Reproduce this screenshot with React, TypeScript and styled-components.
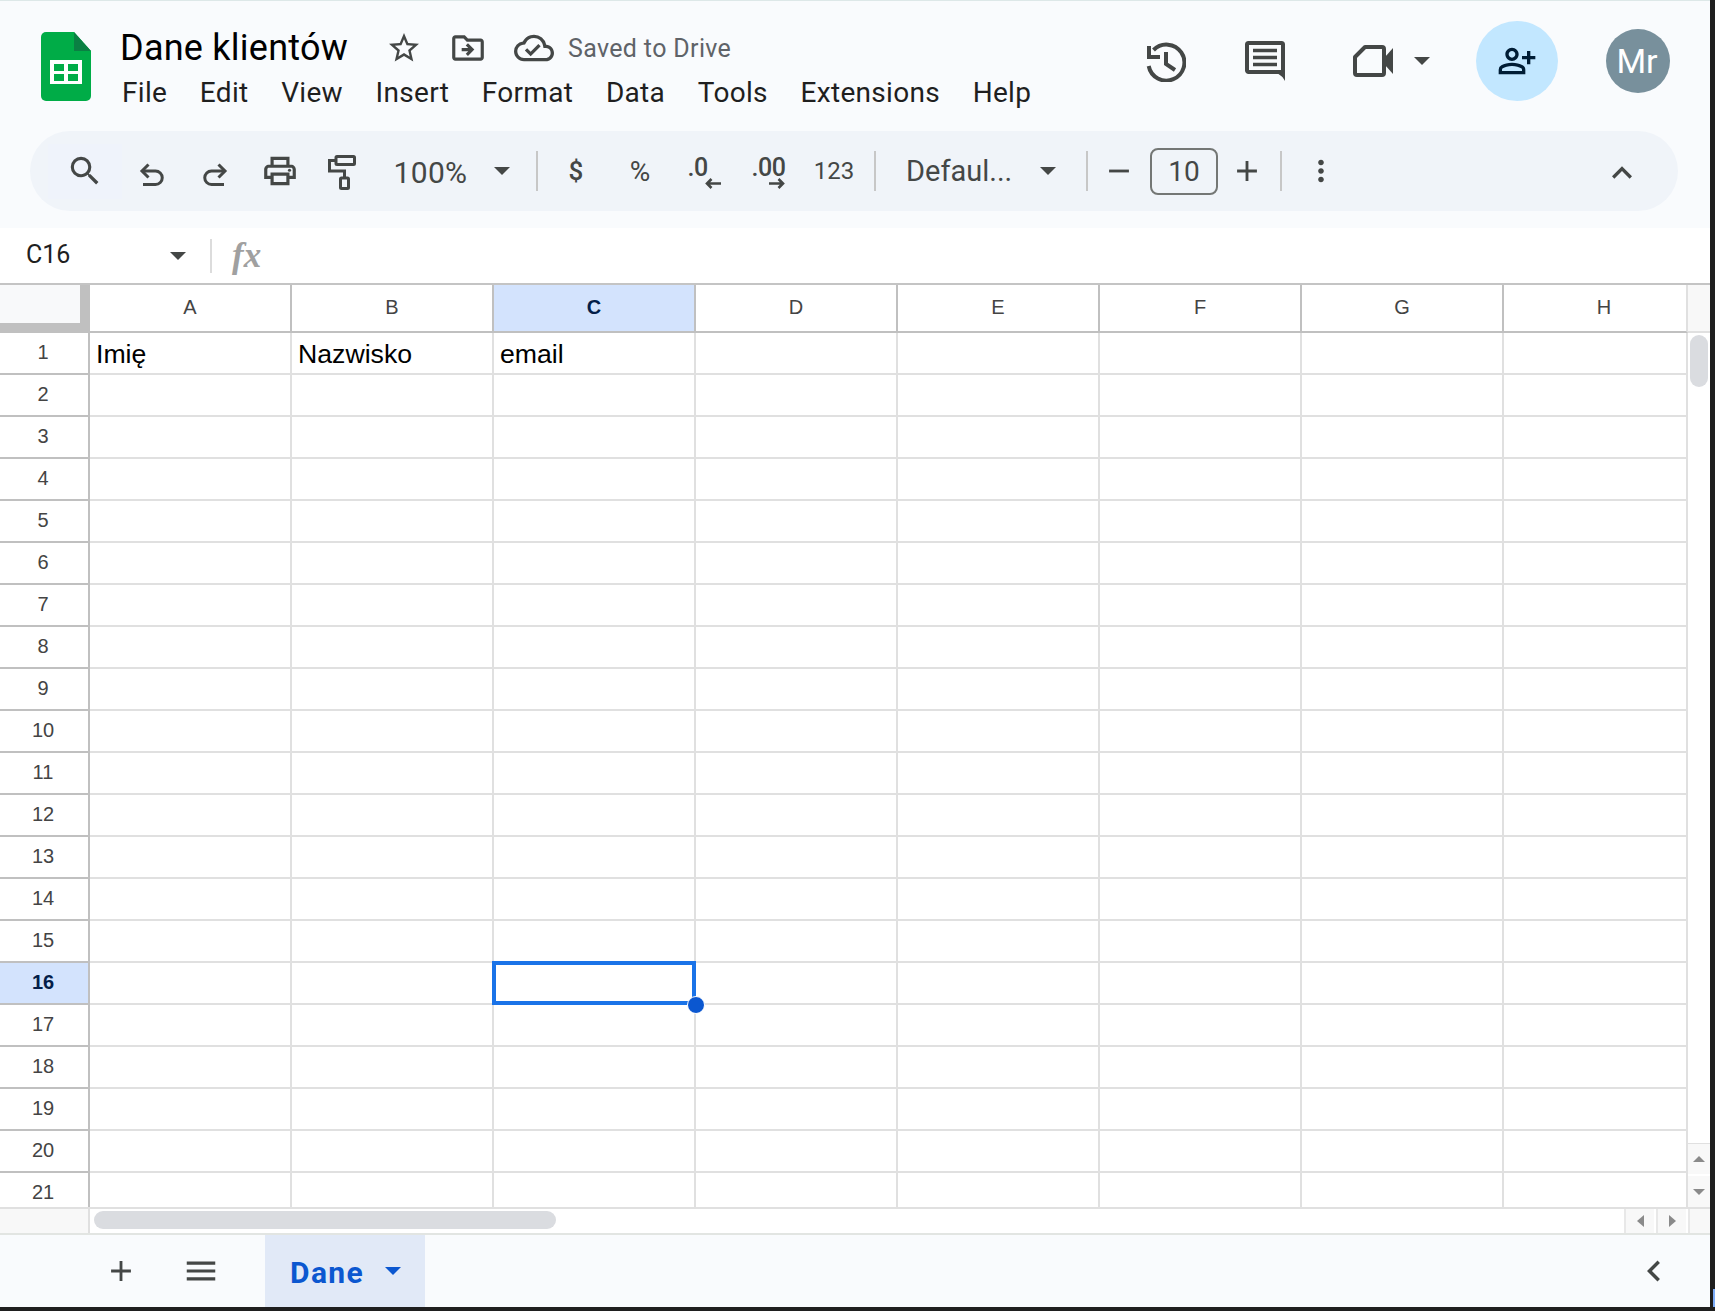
import React from 'react';
import styled, { createGlobalStyle } from 'styled-components';
import {
  MdAdd,
  MdChevronLeft,
  MdExpandLess,
  MdMenu,
  MdMoreVert,
  MdOutlineCloudDone,
  MdOutlineDriveFileMove,
  MdOutlinePersonAddAlt,
  MdOutlinePrint,
  MdRemove,
  MdSearch,
  MdStarBorder,
} from 'react-icons/md';

const GlobalStyle = createGlobalStyle`
  html, body {
    margin: 0;
    padding: 0;
    background: #1f1f1f;
    font-family: Roboto, "Liberation Sans", sans-serif;
  }
  * { box-sizing: border-box; }
`;

const Screen = styled.div`
  position: relative;
  width: 1715px;
  height: 1311px;
  overflow: hidden;
  background: #1f1f1f;
`;

const Corner = styled.div`
  position: absolute;
  right: 0;
  top: 1289px;
  width: 2px;
  height: 18px;
  background: #7cacf8;
`;

const Page = styled.div`
  width: 1710px;
  height: 1307px;
  display: flex;
  flex-direction: column;
  background: #fff;
  border-top: 1px solid #dde8e8;
`;

const Head = styled.header`
  height: 227px;
  flex: none;
  background: #f9fbfd;
  display: flex;
  flex-direction: column;
`;

const TitleBar = styled.div`
  height: 130px;
  display: flex;
  padding: 31px 40px 0 41px;
`;

const Logo = styled.svg`
  width: 50px;
  height: 69px;
  flex: none;
`;

const TitleBlock = styled.div`
  margin-left: 29px;
  display: flex;
  flex-direction: column;
`;

const TitleRow = styled.div`
  height: 46px;
  display: flex;
  align-items: center;
  margin-top: -7px;
`;

const DocTitle = styled.div`
  font-size: 36px;
  line-height: 46px;
  color: #000;
  letter-spacing: 0.25px;
  width: 266px;
  white-space: nowrap;
`;

const TitleIcon = styled.div<{ $w: number }>`
  width: ${(p) => p.$w}px;
  height: 46px;
  display: flex;
  align-items: center;
  justify-content: center;
  color: #444746;
  flex: none;
`;

const Saved = styled.div`
  margin-left: 14px;
  font-size: 25px;
  letter-spacing: 0.35px;
  color: #5f6368;
  white-space: nowrap;
`;

const MenuRow = styled.nav`
  display: flex;
  gap: 32.7px;
  margin-top: 4px;
  padding-left: 2px;
`;

const MenuItem = styled.span`
  font-size: 28px;
  line-height: 36px;
  letter-spacing: 0.3px;
  color: #1f1f1f;
`;

const RightActions = styled.div`
  margin-left: auto;
  display: flex;
  align-items: center;
  height: 80px;
  margin-top: -11px;
  color: #444746;
`;

const ActionSlot = styled.div<{ $w: number }>`
  width: ${(p) => p.$w}px;
  height: 80px;
  display: flex;
  align-items: center;
  justify-content: center;
  flex: none;
`;

const ShareCircle = styled.div`
  width: 82px;
  height: 80px;
  border-radius: 50%;
  background: #c2e7ff;
  color: #001d35;
  display: flex;
  align-items: center;
  justify-content: center;
  margin-left: 46px;
  flex: none;
`;

const Avatar = styled.div`
  width: 64px;
  height: 64px;
  border-radius: 50%;
  background: #78909c;
  color: #fff;
  font-size: 34px;
  display: flex;
  align-items: center;
  justify-content: center;
  padding-right: 2px;
  margin-left: 48px;
  flex: none;
`;

const Toolbar = styled.div`
  margin-left: 30px;
  width: 1648px;
  height: 80px;
  border-radius: 40px;
  background: #f0f4f9;
  display: flex;
  align-items: center;
  padding: 0 24px 0 18px;
  color: #444746;
`;

const Slot = styled.div<{ $w: number; $active?: boolean; $down?: number }>`
  width: ${(p) => p.$w}px;
  height: 55px;
  flex: none;
  display: flex;
  align-items: center;
  justify-content: center;
  padding-top: ${(p) => p.$down ?? 0}px;
  background: ${(p) => (p.$active ? '#eff3fb' : 'transparent')};
`;

const ToolText = styled.span<{ $size: number; $weight?: number; $spacing?: number }>`
  font-size: ${(p) => p.$size}px;
  font-weight: ${(p) => p.$weight ?? 400};
  letter-spacing: ${(p) => p.$spacing ?? 0}px;
  color: #444746;
  white-space: nowrap;
`;

const Sep = styled.div<{ $left?: number }>`
  width: 2px;
  height: 40px;
  flex: none;
  background: #c7c7c7;
  margin-left: ${(p) => p.$left ?? 0}px;
`;

const Caret = styled.div<{ $color?: string; $size?: number }>`
  width: 0;
  height: 0;
  flex: none;
  border-left: ${(p) => p.$size ?? 8}px solid transparent;
  border-right: ${(p) => p.$size ?? 8}px solid transparent;
  border-top: ${(p) => p.$size ?? 8}px solid ${(p) => p.$color ?? '#444746'};
`;

const DecimalStack = styled.div`
  width: 33px;
  display: flex;
  flex-direction: column;
  align-items: flex-end;
  line-height: 20px;
  margin-top: 4px;
`;

const DecimalLabel = styled.span`
  align-self: flex-start;
  font-size: 25px;
  font-weight: 500;
  color: #444746;
  letter-spacing: -0.5px;
`;

const FontName = styled.div`
  width: 133px;
  padding-left: 30px;
  flex: none;
  white-space: nowrap;
`;

const SizeBox = styled.div`
  width: 68px;
  height: 47px;
  flex: none;
  border: 2px solid #747775;
  border-radius: 8px;
  display: flex;
  align-items: center;
  justify-content: center;
  font-size: 28px;
  color: #444746;
`;

const PushRight = styled.div`
  margin-left: auto;
`;

const FormulaBar = styled.div`
  height: 55px;
  flex: none;
  background: #fff;
  display: flex;
  align-items: center;
`;

const NameBox = styled.div`
  width: 170px;
  padding: 0 0 2px 26px;
  font-size: 25px;
  color: #1f1f1f;
`;

const FormulaSep = styled.div`
  width: 2px;
  height: 34px;
  background: #dcdcdc;
  margin-left: 24px;
`;

const Fx = styled.span`
  margin-left: 20px;
  font-family: "Liberation Serif", serif;
  font-style: italic;
  font-weight: 700;
  font-size: 35px;
  color: #a0a0a0;
`;

const Sheet = styled.div`
  height: 926px;
  flex: none;
  display: flex;
  border-top: 2px solid #c4c4c4;
  border-bottom: 2px solid #e0e0e0;
`;

const GridArea = styled.div`
  width: 1688px;
  flex: none;
  overflow: hidden;
`;

const GridRow = styled.div`
  display: flex;
`;

const CornerCell = styled.div`
  width: 90px;
  height: 48px;
  flex: none;
  background: #f8f9fa;
  border-right: 10px solid #c0c0c0;
  border-bottom: 10px solid #c0c0c0;
`;

const ColHead = styled.div<{ $selected: boolean; $last: boolean }>`
  width: ${(p) => (p.$last ? 184 : 202)}px;
  height: 48px;
  flex: none;
  display: flex;
  align-items: center;
  justify-content: center;
  padding: 0 0 1px ${(p) => (p.$last ? 18 : 0)}px;
  font-family: "Liberation Sans", sans-serif;
  font-size: 20px;
  font-weight: ${(p) => (p.$selected ? 700 : 400)};
  color: ${(p) => (p.$selected ? '#041e49' : '#444')};
  background: ${(p) => (p.$selected ? '#d3e3fd' : '#fff')};
  border-right: 2px solid ${(p) => (p.$last ? '#e0e0e0' : '#c0c0c0')};
  border-bottom: 2px solid #c0c0c0;
`;

const RowHead = styled.div<{ $selected: boolean }>`
  width: 90px;
  height: 42px;
  flex: none;
  display: flex;
  align-items: center;
  justify-content: center;
  padding: 0 2px 2px 0;
  font-family: "Liberation Sans", sans-serif;
  font-size: 20px;
  font-weight: ${(p) => (p.$selected ? 700 : 400)};
  color: ${(p) => (p.$selected ? '#041e49' : '#444')};
  background: ${(p) => (p.$selected ? '#d3e3fd' : '#fff')};
  border-right: 2px solid #c0c0c0;
  border-bottom: 2px solid #c0c0c0;
`;

const Cell = styled.div<{ $last: boolean }>`
  position: relative;
  width: ${(p) => (p.$last ? 184 : 202)}px;
  height: 42px;
  flex: none;
  padding: 2px 6px 0 6px;
  display: flex;
  align-items: center;
  font-family: "Liberation Sans", sans-serif;
  font-size: 26.67px;
  color: #000;
  white-space: nowrap;
  background: #fff;
  border-right: 2px solid #e0e0e0;
  border-bottom: 2px solid #e0e0e0;
`;

const Selection = styled.div`
  position: absolute;
  left: -2px;
  top: -2px;
  width: 204px;
  height: 44px;
  border: 4px solid #1a73e8;
  z-index: 2;
`;

const FillHandle = styled.div`
  position: absolute;
  right: -13px;
  bottom: -13px;
  width: 18px;
  height: 18px;
  border-radius: 50%;
  background: #0b57d0;
  border: 1px solid #fff;
`;

const VScroll = styled.div`
  width: 22px;
  flex: none;
  display: flex;
  flex-direction: column;
`;

const VScrollHead = styled.div`
  height: 48px;
  flex: none;
  background: #f8f8f8;
  border-bottom: 2px solid #e0e0e0;
`;

const VThumb = styled.div`
  width: 18px;
  height: 52px;
  margin: 2px 0 0 2px;
  border-radius: 9px;
  background: #dadce0;
`;

const VScrollButton = styled.div<{ $top?: boolean }>`
  height: 31px;
  flex: none;
  background: #f8f8f8;
  display: flex;
  align-items: center;
  justify-content: center;
  margin-top: ${(p) => (p.$top ? 'auto' : '2px')};
  border-top: ${(p) => (p.$top ? '1px solid #e0e0e0' : 'none')};
`;

const HScroll = styled.div`
  height: 24px;
  flex: none;
  display: flex;
  align-items: center;
  background: #fff;
`;

const HScrollLabel = styled.div`
  width: 88px;
  height: 24px;
  flex: none;
  background: #f8f8f8;
  border-right: 2px solid #e0e0e0;
  box-sizing: content-box;
`;

const HThumb = styled.div`
  width: 462px;
  height: 18px;
  margin: -2px 0 0 4px;
  border-radius: 9px;
  background: #dadce0;
`;

const HButtons = styled.div`
  margin-left: auto;
  display: flex;
  gap: 2px;
  height: 24px;
`;

const HButton = styled.div<{ $w: number }>`
  width: ${(p) => p.$w}px;
  background: #f8f8f8;
  display: flex;
  align-items: center;
  justify-content: center;
  border-left: 2px solid #e8e8e8;
`;

const ArrowH = styled.div<{ $dir: 'left' | 'right' }>`
  width: 0;
  height: 0;
  border-top: 6px solid transparent;
  border-bottom: 6px solid transparent;
  border-${(p) => (p.$dir === 'left' ? 'right' : 'left')}: 7px solid #8a8a8a;
`;

const ArrowV = styled.div<{ $dir: 'up' | 'down' }>`
  width: 0;
  height: 0;
  border-left: 6px solid transparent;
  border-right: 6px solid transparent;
  border-${(p) => (p.$dir === 'up' ? 'bottom' : 'top')}: 6px solid #8a8a8a;
`;

const Footer = styled.footer`
  flex: 1;
  display: flex;
  background: #f9fbfd;
  border-top: 2px solid #e2e5e2;
  color: #444746;
  padding: 0 26px 0 91px;
`;

const FooterSlot = styled.div<{ $gap?: number }>`
  width: 60px;
  flex: none;
  margin-left: ${(p) => p.$gap ?? 0}px;
  display: flex;
  align-items: center;
  justify-content: center;
`;

const SheetTab = styled.div`
  width: 160px;
  margin-left: 34px;
  flex: none;
  background: #e1e9f7;
  display: flex;
  align-items: center;
  padding-left: 25px;
  color: #0b57d0;
`;

const SheetName = styled.span`
  font-size: 30px;
  font-weight: 700;
  letter-spacing: 1.4px;
  width: 95px;
  padding-top: 3px;
`;

const columns = ['A', 'B', 'C', 'D', 'E', 'F', 'G', 'H'];
const rows = Array.from({ length: 21 }, (_, i) => i + 1);
const firstRow = ['Imię', 'Nazwisko', 'email'];
const menus = ['File', 'Edit', 'View', 'Insert', 'Format', 'Data', 'Tools', 'Extensions', 'Help'];

const SheetsLogo = () => (
  <Logo viewBox="0 0 50 69">
    <path d="M5 0H33L50 19V64a5 5 0 0 1-5 5H5a5 5 0 0 1-5-5V5a5 5 0 0 1 5-5Z" fill="#00ac47" />
    <path d="M33 0L50 19H33Z" fill="#0a8043" />
    <rect x="9" y="28" width="32" height="24" fill="#fff" />
    <rect x="13" y="32" width="10" height="7" fill="#00ac47" />
    <rect x="27" y="32" width="10" height="7" fill="#00ac47" />
    <rect x="13" y="42" width="10" height="7" fill="#00ac47" />
    <rect x="27" y="42" width="10" height="7" fill="#00ac47" />
  </Logo>
);

const HistoryIcon = () => (
  <svg width="40" height="41" viewBox="0 0 40 41" fill="none" stroke="#444746" strokeWidth="4">
    <path d="M7.5 9A18 18 0 1 1 2.7 25" />
    <path d="M3 5V16H14" />
    <path d="M20 11V23L29 29" />
  </svg>
);

const CommentIcon = () => (
  <svg width="40" height="40" viewBox="0 0 40 40" fill="none">
    <path d="M2 3.5A1.5 1.5 0 0 1 3.5 2h33A1.5 1.5 0 0 1 38 3.5V34l-4-3H3.5A1.5 1.5 0 0 1 2 29.5Z" stroke="#444746" strokeWidth="4" strokeLinejoin="round" />
    <path d="M33 29h7v11Z" fill="#444746" />
    <path d="M8 9.5h24M8 16.5h24M8 23.5h24" stroke="#444746" strokeWidth="3.5" />
  </svg>
);

const VideoIcon = () => (
  <svg width="40" height="32" viewBox="0 0 40 32" fill="none">
    <path d="M12 2H29a2 2 0 0 1 2 2V28a2 2 0 0 1-2 2H4a2 2 0 0 1-2-2V12Z" stroke="#444746" strokeWidth="4" strokeLinejoin="round" />
    <path d="M32 12L40 3V29L32 20Z" fill="#444746" />
  </svg>
);

const UndoIcon = ({ flip }: { flip?: boolean }) => (
  <svg width="25" height="23" viewBox="0 0 25 23" fill="none" stroke="#444746" strokeWidth="3">
    <g transform={flip ? 'matrix(-1 0 0 1 25 0)' : undefined}>
      <path d="M9.5 1.5L3 8l6.5 6.5" />
      <path d="M3 8H16.5a6.5 6.5 0 0 1 0 13.5H4" />
    </g>
  </svg>
);

const RollerIcon = () => (
  <svg width="28" height="35" viewBox="0 0 28 35" fill="none" stroke="#444746" strokeWidth="3">
    <rect x="8" y="1.5" width="18.5" height="8" rx="1" />
    <path d="M8 5.5H1.5V16H16.5V23" />
    <rect x="12.5" y="23" width="8" height="10.5" rx="1" />
  </svg>
);

const SmallArrow = ({ flip }: { flip?: boolean }) => (
  <svg width="16" height="11" viewBox="0 0 16 11" fill="none">
    <g transform={flip ? 'matrix(-1 0 0 1 16 0)' : undefined}>
      <path d="M16 5.5H3M6.5 1L2 5.5L6.5 10" stroke="#444746" strokeWidth="2.6" />
    </g>
  </svg>
);

export default function App() {
  return (
    <>
      <GlobalStyle />
      <Screen>
        <Page>
          <Head>
            <TitleBar>
              <SheetsLogo />
              <TitleBlock>
                <TitleRow>
                  <DocTitle>Dane klientów</DocTitle>
                  <TitleIcon $w={36}><MdStarBorder size={38} /></TitleIcon>
                  <TitleIcon $w={92}><MdOutlineDriveFileMove size={38} /></TitleIcon>
                  <TitleIcon $w={40}><MdOutlineCloudDone size={40} /></TitleIcon>
                  <Saved>Saved to Drive</Saved>
                </TitleRow>
                <MenuRow>
                  {menus.map((m) => (
                    <MenuItem key={m}>{m}</MenuItem>
                  ))}
                </MenuRow>
              </TitleBlock>
              <RightActions>
                <ActionSlot $w={64}><HistoryIcon /></ActionSlot>
                <ActionSlot $w={134}><CommentIcon /></ActionSlot>
                <ActionSlot $w={82}><VideoIcon /></ActionSlot>
                <Caret />
                <ShareCircle><MdOutlinePersonAddAlt size={40} /></ShareCircle>
                <Avatar>Mr</Avatar>
              </RightActions>
            </TitleBar>
            <Toolbar>
              <Slot $w={74} $active><MdSearch size={38} /></Slot>
              <Slot $w={58} $down={6}><UndoIcon /></Slot>
              <Slot $w={70} $down={6}><UndoIcon flip /></Slot>
              <Slot $w={60}><MdOutlinePrint size={38} /></Slot>
              <Slot $w={64} $down={2}><RollerIcon /></Slot>
              <Slot $w={113} $down={2}><ToolText $size={30} $spacing={0.3}>100%</ToolText></Slot>
              <Slot $w={30}><Caret /></Slot>
              <Sep $left={19} />
              <Slot $w={76}><ToolText $size={26} $weight={500}>$</ToolText></Slot>
              <Slot $w={52}><ToolText $size={28}>%</ToolText></Slot>
              <Slot $w={76}>
                <DecimalStack>
                  <DecimalLabel>.0</DecimalLabel>
                  <SmallArrow />
                </DecimalStack>
              </Slot>
              <Slot $w={52}>
                <DecimalStack>
                  <DecimalLabel>.00</DecimalLabel>
                  <SmallArrow flip />
                </DecimalStack>
              </Slot>
              <Slot $w={80}><ToolText $size={24}>123</ToolText></Slot>
              <Sep />
              <FontName><ToolText $size={29}>Defaul...</ToolText></FontName>
              <Slot $w={77}><Caret /></Slot>
              <Sep />
              <Slot $w={62}><MdRemove size={34} /></Slot>
              <SizeBox>10</SizeBox>
              <Slot $w={58}><MdAdd size={34} /></Slot>
              <Sep $left={4} />
              <Slot $w={77}><MdMoreVert size={34} /></Slot>
              <PushRight />
              <Slot $w={64} $down={4}><MdExpandLess size={40} /></Slot>
            </Toolbar>
          </Head>
          <FormulaBar>
            <NameBox>C16</NameBox>
            <Caret />
            <FormulaSep />
            <Fx>fx</Fx>
          </FormulaBar>
          <Sheet>
            <GridArea>
              <GridRow>
                <CornerCell />
                {columns.map((c) => (
                  <ColHead key={c} $selected={c === 'C'} $last={c === 'H'}>{c}</ColHead>
                ))}
              </GridRow>
              {rows.map((r) => (
                <GridRow key={r}>
                  <RowHead $selected={r === 16}>{r}</RowHead>
                  {columns.map((c, i) => (
                    <Cell key={c} $last={c === 'H'}>
                      {r === 1 ? firstRow[i] : null}
                      {r === 16 && c === 'C' ? (
                        <Selection>
                          <FillHandle />
                        </Selection>
                      ) : null}
                    </Cell>
                  ))}
                </GridRow>
              ))}
            </GridArea>
            <VScroll>
              <VScrollHead />
              <VThumb />
              <VScrollButton $top><ArrowV $dir="up" /></VScrollButton>
              <VScrollButton><ArrowV $dir="down" /></VScrollButton>
            </VScroll>
          </Sheet>
          <HScroll>
            <HScrollLabel />
            <HThumb />
            <HButtons>
              <HButton $w={30}><ArrowH $dir="left" /></HButton>
              <HButton $w={30}><ArrowH $dir="right" /></HButton>
              <HButton $w={22} />
            </HButtons>
          </HScroll>
          <Footer>
            <FooterSlot><MdAdd size={34} /></FooterSlot>
            <FooterSlot $gap={20}><MdMenu size={38} /></FooterSlot>
            <SheetTab>
              <SheetName>Dane</SheetName>
              <Caret $color="#0b57d0" />
            </SheetTab>
            <PushRight />
            <FooterSlot><MdChevronLeft size={42} /></FooterSlot>
          </Footer>
        </Page>
        <Corner />
      </Screen>
    </>
  );
}
